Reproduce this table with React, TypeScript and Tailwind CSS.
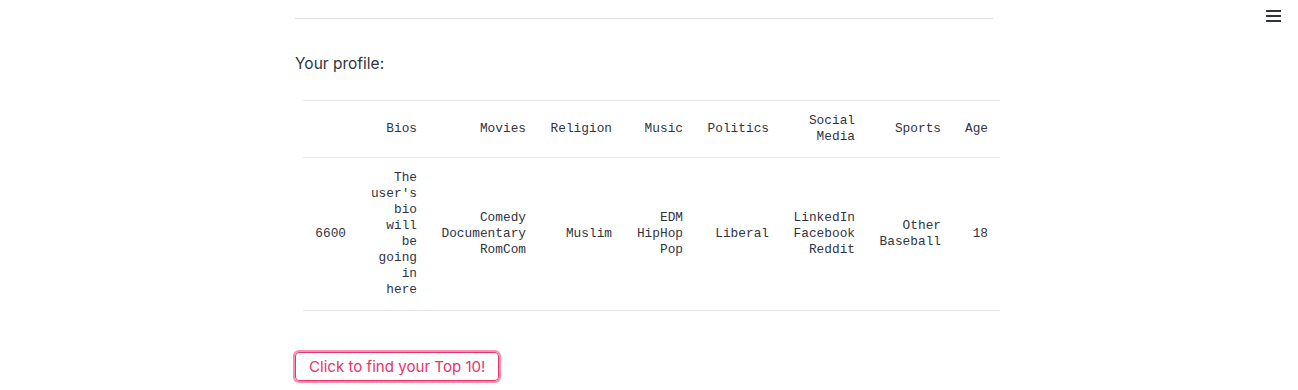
const mono = "font-['Liberation_Mono','DejaVu_Sans_Mono',monospace]"

const cols = [
  { key: 'idx', label: [''], w: 'w-[55px]' },
  { key: 'bios', label: ['Bios'], w: 'w-[71px]' },
  { key: 'movies', label: ['Movies'], w: 'w-[109px]' },
  { key: 'religion', label: ['Religion'], w: 'w-[86px]' },
  { key: 'music', label: ['Music'], w: 'w-[71px]' },
  { key: 'politics', label: ['Politics'], w: 'w-[86px]' },
  { key: 'social', label: ['Social', 'Media'], w: 'w-[86px]' },
  { key: 'sports', label: ['Sports'], w: 'w-[86px]' },
  { key: 'age', label: ['Age'], w: 'w-[47px]' },
]

const row: Record<string, string[]> = {
  idx: ['6600'],
  bios: ['The', "user's", 'bio', 'will', 'be', 'going', 'in', 'here'],
  movies: ['Comedy', 'Documentary', 'RomCom'],
  religion: ['Muslim'],
  music: ['EDM', 'HipHop', 'Pop'],
  politics: ['Liberal'],
  social: ['LinkedIn', 'Facebook', 'Reddit'],
  sports: ['Other', 'Baseball'],
  age: ['18'],
}

function Lines({ lines }: { lines: string[] }) {
  return (
    <>
      {lines.map((l, i) => (
        <div key={i} className="whitespace-pre">{l}</div>
      ))}
    </>
  )
}

export default function App() {
  return (
    <div className="relative h-[390px] overflow-hidden bg-white text-[#31333f] font-['Inter','Noto_Sans',sans-serif]">
      <button className="absolute right-[17px] top-[10px] flex flex-col gap-[3px] p-0">
        <span className="block h-[2px] w-[15px] bg-[#31333f]" />
        <span className="block h-[2px] w-[15px] bg-[#31333f]" />
        <span className="block h-[2px] w-[15px] bg-[#31333f]" />
      </button>

      <div className="ml-[295px] w-[698px]">
        <div className="pt-[18px]">
          <div className="h-px bg-[#dcdee4]" />
        </div>

        <p className="mt-[33px] text-[15.5px] leading-6">Your profile:</p>

        <table className={`ml-2 mt-[24px] w-[697px] table-fixed border-collapse text-[12.8px] leading-4 ${mono}`}>
          <thead>
            <tr className="border-y border-[#e6e8ee]">
              {cols.map(c => (
                <th key={c.key} className={`${c.w} px-3 py-3 text-right align-middle font-normal`}>
                  <Lines lines={c.label} />
                </th>
              ))}
            </tr>
          </thead>
          <tbody>
            <tr className="border-b border-[#e6e8ee]">
              {cols.map(c => (
                <td key={c.key} className={`${c.w} px-3 py-3 text-right align-middle`}>
                  <Lines lines={row[c.key]} />
                </td>
              ))}
            </tr>
          </tbody>
        </table>

        <button className="mt-[41px] h-[29px] rounded-[4px] border border-[#e8336b] px-[13px] text-[15.1px] leading-none text-[#e8336b] ring-2 ring-[#f691b0]">
          Click to find your Top 10!
        </button>
      </div>
    </div>
  )
}
